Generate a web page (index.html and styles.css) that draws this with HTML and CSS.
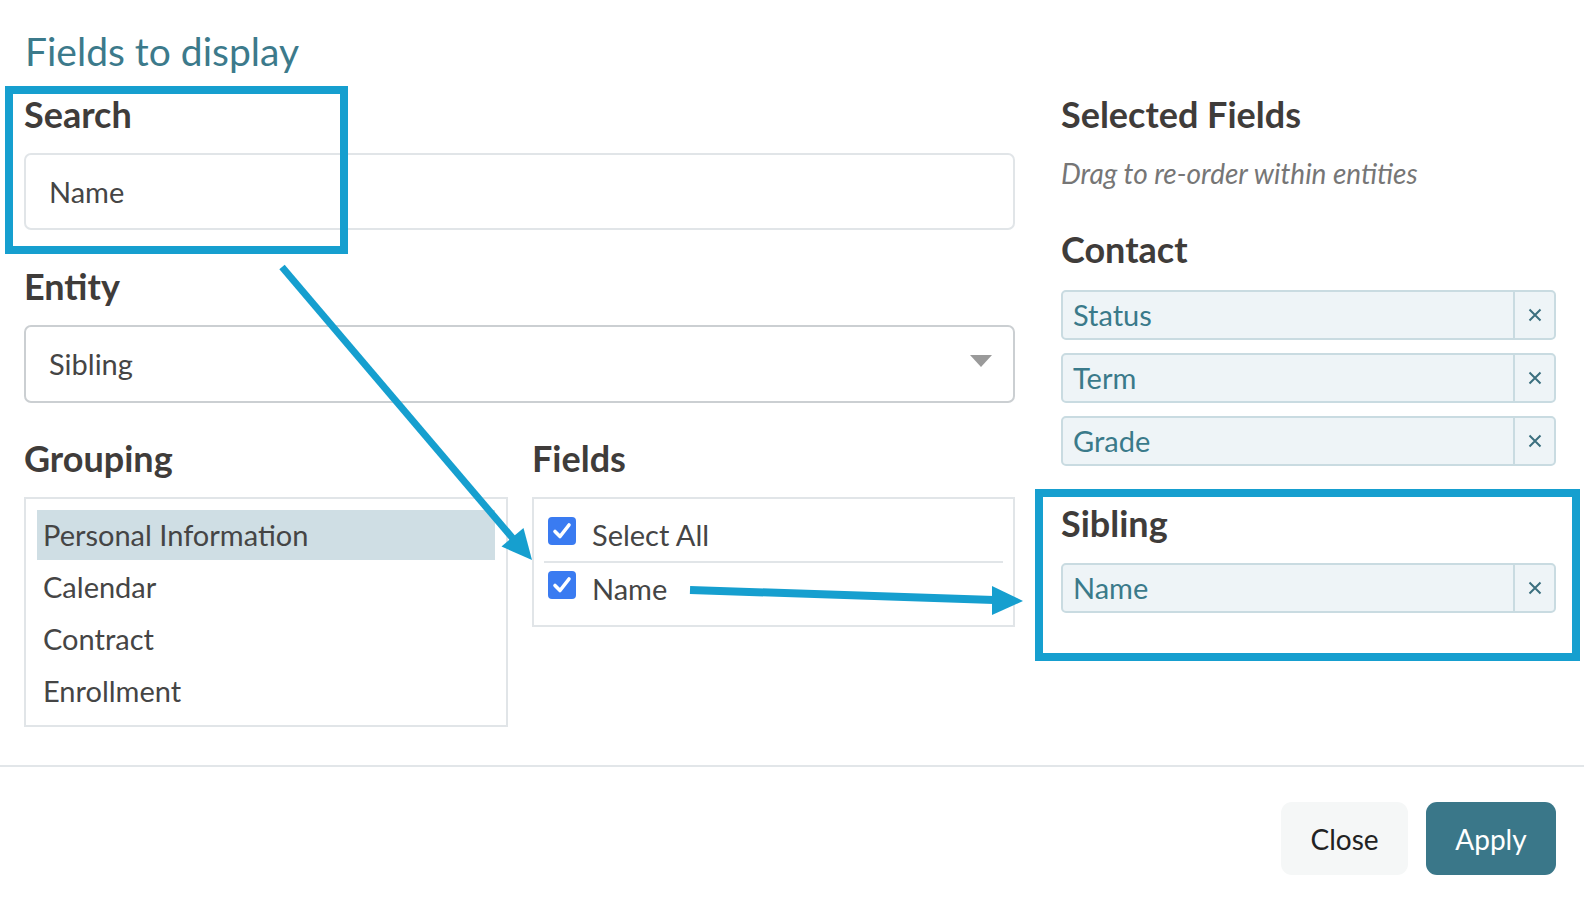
FILE: index.html
```html
<!DOCTYPE html>
<html lang="en">
<head>
<meta charset="utf-8">
<title>Fields to display</title>
<link rel="stylesheet" href="styles.css">
</head>
<body>
<div class="modal">
  <header class="modal-header">
    <h2 class="title">Fields to display</h2>
  </header>

  <div class="modal-body">
    <div class="col-left">
      <h3 class="label">Search</h3>
      <div class="input control">Name</div>

      <h3 class="label section">Entity</h3>
      <div class="select control">
        <span>Sibling</span>
        <svg class="caret" width="22" height="12" viewBox="0 0 22 12"><polygon points="0,0 22,0 11,12" fill="#9a9a9a"/></svg>
      </div>

      <div class="split">
        <div class="split-col">
          <h3 class="label section-sm">Grouping</h3>
          <ul class="list control">
            <li class="active">Personal Information</li>
            <li>Calendar</li>
            <li>Contract</li>
            <li>Enrollment</li>
          </ul>
        </div>
        <div class="split-col">
          <h3 class="label section-sm">Fields</h3>
          <div class="fields control">
            <div class="field-row">
              <span class="checkbox"><svg width="28" height="28" viewBox="0 0 28 28"><path d="M7 14.5 L12 19.5 L21 8" fill="none" stroke="#fff" stroke-width="3.6" stroke-linecap="round" stroke-linejoin="round"/></svg></span>
              <span class="field-text">Select All</span>
            </div>
            <div class="field-row">
              <span class="checkbox"><svg width="28" height="28" viewBox="0 0 28 28"><path d="M7 14.5 L12 19.5 L21 8" fill="none" stroke="#fff" stroke-width="3.6" stroke-linecap="round" stroke-linejoin="round"/></svg></span>
              <span class="field-text">Name</span>
            </div>
          </div>
        </div>
      </div>
    </div>

    <div class="col-right">
      <h3 class="label">Selected Fields</h3>
      <p class="hint">Drag to re-order within entities</p>

      <h3 class="label entity-title">Contact</h3>
      <div class="chips">
        <div class="chip"><span class="chip-label">Status</span><span class="chip-remove"><svg width="14" height="14" viewBox="0 0 14 14"><path d="M1.5 1.5 L12.5 12.5 M12.5 1.5 L1.5 12.5" stroke="#3b6f7f" stroke-width="2"/></svg></span></div>
        <div class="chip"><span class="chip-label">Term</span><span class="chip-remove"><svg width="14" height="14" viewBox="0 0 14 14"><path d="M1.5 1.5 L12.5 12.5 M12.5 1.5 L1.5 12.5" stroke="#3b6f7f" stroke-width="2"/></svg></span></div>
        <div class="chip"><span class="chip-label">Grade</span><span class="chip-remove"><svg width="14" height="14" viewBox="0 0 14 14"><path d="M1.5 1.5 L12.5 12.5 M12.5 1.5 L1.5 12.5" stroke="#3b6f7f" stroke-width="2"/></svg></span></div>
      </div>

      <h3 class="label entity-title sibling-title">Sibling</h3>
      <div class="chips">
        <div class="chip"><span class="chip-label">Name</span><span class="chip-remove"><svg width="14" height="14" viewBox="0 0 14 14"><path d="M1.5 1.5 L12.5 12.5 M12.5 1.5 L1.5 12.5" stroke="#3b6f7f" stroke-width="2"/></svg></span></div>
      </div>
    </div>
  </div>

  <footer class="modal-footer">
    <button class="btn btn-close">Close</button>
    <button class="btn btn-apply">Apply</button>
  </footer>

  <svg class="annotations" width="1584" height="902" viewBox="0 0 1584 902">
    <g fill="none" stroke="#169fcf" stroke-width="8">
      <rect x="9" y="90" width="335" height="160"/>
      <rect x="1039" y="493" width="537" height="164"/>
    </g>
    <line x1="282" y1="267" x2="515" y2="541" stroke="#169fcf" stroke-width="7"/>
    <polygon points="532,560 501.5,546.5 523.5,528" fill="#169fcf"/>
    <line x1="690" y1="590" x2="994" y2="600" stroke="#169fcf" stroke-width="8"/>
    <polygon points="1023,601 992,586 992,615" fill="#169fcf"/>
  </svg>
</div>
</body>
</html>
```

FILE: styles.css
```css
* { box-sizing: border-box; }

body {
  margin: 0;
  background: #ffffff;
  font-family: Lato, "Noto Sans", sans-serif;
  color: #444444;
}

.modal {
  position: relative;
  width: 1584px;
  height: 902px;
  overflow: hidden;
  background: #ffffff;
}

.modal-header {
  padding: 28px 24px 0 25px;
}

.title {
  margin: 0;
  font-size: 39px;
  line-height: 47px;
  font-weight: 400;
  color: #3c7a8b;
}

.modal-body {
  display: grid;
  grid-template-columns: 991px 495px;
  column-gap: 46px;
  padding: 0 28px 0 24px;
  margin-top: 18px;
}

.label {
  margin: 0;
  font-size: 36px;
  line-height: 42px;
  font-weight: 700;
  color: #3f3c3a;
}

.control { margin-top: 18px; }
.section { margin-top: 35px; }
.section-sm { margin-top: 34px; }

.input,
.select {
  display: flex;
  align-items: center;
  border-radius: 7px;
  padding-left: 23px;
  font-size: 29px;
  line-height: 34px;
  color: #454545;
}

.input {
  height: 77px;
  border: 2px solid #e1e5e8;
}

.select {
  height: 78px;
  border: 2px solid #cbcfd2;
  justify-content: space-between;
  padding-right: 21px;
}

.caret { display: block; margin-top: -6px; }

.split {
  display: grid;
  grid-template-columns: 484px 483px;
  column-gap: 24px;
}

.list {
  list-style: none;
  margin-bottom: 0;
  padding: 11px 11px 9px;
  border: 2px solid #e1e5e8;
}

.list li {
  height: 50px;
  line-height: 50px;
  margin-bottom: 2px;
  padding-left: 6px;
  font-size: 29px;
  color: #454545;
}

.list li:last-child { margin-bottom: 0; }

.list li.active { background: #cfdee4; }

.fields {
  border: 2px solid #e1e5e8;
  padding: 8px 10px;
}

.field-row {
  display: flex;
  align-items: flex-start;
  padding: 10px 0 12px 4px;
}

.field-row + .field-row {
  border-top: 2px solid #e1e5e8;
  padding: 8px 0 14px 4px;
}

.checkbox {
  flex: none;
  display: block;
  width: 28px;
  height: 28px;
  border-radius: 4px;
  background: #3a7bf1;
}

.checkbox svg { display: block; }

.field-text {
  margin: 4px 0 0 16px;
  font-size: 29px;
  line-height: 28px;
  color: #454545;
}

.hint {
  margin: 21px 0 0;
  font-size: 28px;
  line-height: 34px;
  font-style: italic;
  color: #767676;
}

.entity-title { margin-top: 38px; }
.sibling-title { margin-top: 36px; }

.chips {
  display: flex;
  flex-direction: column;
  gap: 13px;
  margin-top: 20px;
}

.sibling-title + .chips { margin-top: 19px; }

.chip {
  display: flex;
  height: 50px;
  border: 2px solid #c9dbe1;
  border-radius: 5px;
  background: #eef4f7;
}

.chip-label {
  flex: 1;
  display: flex;
  align-items: center;
  padding-left: 10px;
  font-size: 29px;
  line-height: 34px;
  color: #3a7a8a;
}

.chip-remove {
  width: 41px;
  display: flex;
  align-items: center;
  justify-content: center;
  border-left: 2px solid #c9dbe1;
}

.chip-remove svg { display: block; }

.modal-footer {
  margin-top: 38px;
  border-top: 2px solid #e2e6e9;
  padding: 35px 28px 0;
  display: flex;
  justify-content: flex-end;
  gap: 18px;
}

.btn {
  height: 73px;
  border: none;
  border-radius: 11px;
  padding: 0;
  font-family: Lato, "Noto Sans", sans-serif;
  font-size: 28px;
  line-height: 34px;
  cursor: pointer;
}

.btn-close {
  width: 127px;
  background: #f5f7f7;
  color: #222222;
}

.btn-apply {
  width: 130px;
  background: #3a7789;
  color: #ffffff;
}

.annotations {
  position: absolute;
  top: 0;
  left: 0;
  pointer-events: none;
}
```
